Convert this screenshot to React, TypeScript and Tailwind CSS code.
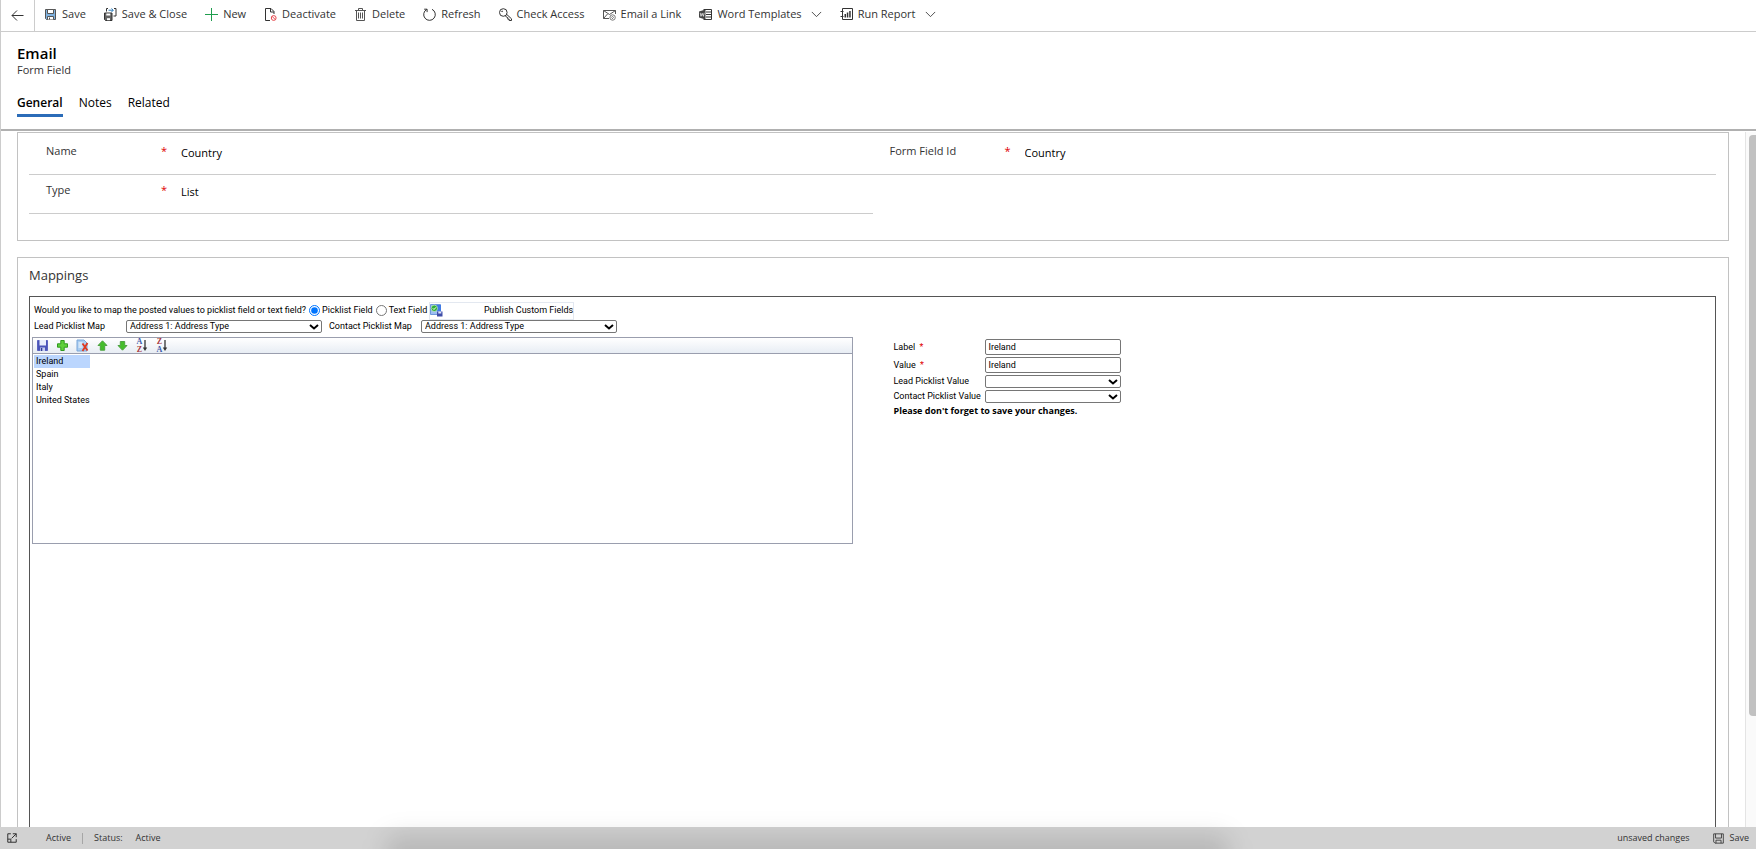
import React, { useState } from "react"

type IconProps = { children: React.ReactNode; className?: string }

const Icon = ({ children, className = "size-[13px]" }: IconProps) => (
    <svg viewBox="0 0 13 13" fill="none" stroke="#333333" strokeWidth="1" className={`${className} shrink-0`} aria-hidden="true">
        {children}
    </svg>
)

//^ COMMAND BAR ICONS ====================================================================================================
const SaveIcon = () => (
    <Icon>
        <path d="M1.500 1.500h10v10h-9l-1-1z" fill="#7fb2e0" stroke="#555" />
        <path d="M3.500 1.500h6v4h-6z" fill="#fff" stroke="#555" />
        <path d="M3.500 11.500v-3h6v3" fill="#fff" stroke="#555" />
        <path d="M5.500 9.500v2" stroke="#555" />
    </Icon>
)

const SaveCloseIcon = () => (
    <Icon>
        <path d="M.5 5h7.500v7.500H1.500l-1-1z" fill="#666" />
        <path d="M2.300 5.500h4v2h-4z" fill="#fff" stroke="none" />
        <path d="M3 10.200h3v2H3z" fill="#fff" stroke="none" />
        <path d="M2.500 3.500V.5H4M10 .5h2V8H9.500" />
        <path d="M4.500 2.200h4.500M7.500.5l1.800 1.700L7.500 4" stroke="#2a7ab8" />
    </Icon>
)

const NewIcon = () => (
    <Icon>
        <path d="M6.500 0v13M0 6.500h13" stroke="#1f9d4d" />
    </Icon>
)

const DeactivateIcon = () => (
    <Icon>
        <path d="M6 12.500H1.500V.5h5.500l3 3V6M6.500.5v3.500h3.500" />
        <circle cx="9.700" cy="10" r="2.400" stroke="#e5484d" fill="#fff" />
        <path d="M8 8.300l3.400 3.400" stroke="#e5484d" />
    </Icon>
)

const DeleteIcon = () => (
    <Icon>
        <path d="M1 2.500h11M4.500 2.500V.5h4v2M2.500 2.500v10h8v-10M4.500 4.500v6M6.500 4.500v6M8.500 4.500v6" stroke="#555" />
    </Icon>
)

const RefreshIcon = () => (
    <Icon>
        <path d="M9 1.300A5.800 5.800 0 1 1 3.800 1.400M1.200 1.200h2.900v2.900" />
    </Icon>
)

const KeyIcon = () => (
    <Icon>
        <circle cx="4.300" cy="4.500" r="3.800" />
        <circle cx="3.100" cy="3.300" r=".4" />
        <path d="M7.600 6.300l4.900 4.500v1.700h-2.300v-1.300H8.800V9.700L7 8.600l-.8-.8" />
    </Icon>
)

const EmailIcon = () => (
    <Icon>
        <path d="M6 10.500H.5v-8h12V6M.5 2.500l6 4 6-4M.5 10.500l4-4.500" stroke="#555" />
        <circle cx="9.600" cy="9.500" r="2.700" fill="#fff" stroke="#777" />
        <path d="M8 9.800l1.500-1.500 1 1M9 11l1.700-1.700" stroke="#777" />
    </Icon>
)

const WordIcon = () => (
    <Icon>
        <path d="M4.500 1.500h8v10h-8M7 4h5M7 6.500h5M7 9h5" />
        <path d="M0 3.500L6.500 1.500v10L0 9.500z" fill="#444" stroke="none" />
        <path d="M1.200 4.800l.8 3.500 1.200-3 1.200 3 .8-3.500" stroke="#fff" strokeWidth=".7" />
    </Icon>
)

const ReportIcon = () => (
    <Icon>
        <path d="M2.500 3V.5h10v11h-10V9M.5 3.500h3M.5 8.500h3M2.500 4v4" />
        <path d="M4.500 6H6v3.500H4.500zM6.800 4.500h1.500v5H6.800zM9.200 3h1.500v6.500H9.200z" fill="#333" stroke="none" />
    </Icon>
)

const ChevronIcon = () => (
    <Icon className="ml-[4px] size-[11px]">
        <path d="M1 3.500l5.500 5.500L12 3.500" />
    </Icon>
)

//^ PICKLIST TOOLBAR ICONS ===============================================================================================
const DiskIcon = () => (
    <Icon>
        <path d="M1.500 1.500h10v10h-10z" fill="#4a54b8" stroke="#5a63c0" />
        <path d="M3.500 1h6.500v5.500H3.500z" fill="#e8eefc" stroke="none" />
        <path d="M4 8.500h5V12H4z" fill="#c5cdf0" stroke="none" />
        <path d="M4.800 9h1.500v3H4.800z" fill="#2e3a94" stroke="none" />
    </Icon>
)

const PlusIcon = () => (
    <Icon>
        <path d="M4.800 1.500h3.400v3.300h3.300v3.400H8.200v3.300H4.800V8.200H1.500V4.800h3.300z" fill="#5fd03c" stroke="#2f9a1e" />
    </Icon>
)

const RemoveIcon = () => (
    <Icon>
        <path d="M1 1h7l3 3v8H1z" fill="#a9cdf2" stroke="#7aa6d8" />
        <path d="M2.500 4h4M2.500 6h4M2.500 8h4" stroke="#fff" />
        <path d="M6.500 4.500l5 7M11.500 4l-5 8" stroke="#e0391f" strokeWidth="1.800" />
    </Icon>
)

const UpIcon = () => (
    <Icon>
        <path d="M6.500 1.800l4.500 4.700H8.700v4.700H4.300V6.500H2z" fill="#45bd2c" stroke="#4fa343" />
    </Icon>
)

const DownIcon = () => (
    <Icon>
        <path d="M6.500 11.200L11 6.500H8.700V2.500H4.300v4H2z" fill="#45bd2c" stroke="#4fa343" />
    </Icon>
)

type SortProps = { top: string; bottom: string; topClass: string; bottomClass: string }

const SortIcon = ({ top, bottom, topClass, bottomClass }: SortProps) => (
    <span className="flex items-center">
        <span className="flex flex-col font-['Liberation_Serif',serif] text-[8px] leading-[8px] font-bold">
            <span className={topClass}>{top}</span>
            <span className={bottomClass}>{bottom}</span>
        </span>
        <svg viewBox="0 0 6 13" className="h-[13px] w-[6px]" fill="none" stroke="#333" aria-hidden="true">
            <path d="M3 1v9" strokeWidth="1.300" />
            <path d="M.8 8.500h4.400L3 12z" fill="#333" stroke="none" />
        </svg>
    </span>
)

const PublishIcon = () => (
    <Icon>
        <path d="M.5.5h10v10H.5z" fill="#9dbff2" stroke="#6f97dc" />
        <path d="M6 1h5v6H6z" fill="#3f7be6" stroke="none" />
        <circle cx="4.300" cy="4.300" r="3.200" fill="#2fae35" stroke="#e6f5e6" strokeWidth=".6" />
        <path d="M2.800 4.300l1.200 1.200L6 3.300" stroke="#fff" />
        <path d="M7 7.500h5.500v5H7z" fill="#3f4da8" stroke="none" />
        <path d="M8.300 7.500h3v2h-3z" fill="#dfe5fa" stroke="none" />
    </Icon>
)

//^ DATA =================================================================================================================
type Command = { label: string; icon: React.ReactNode; menu?: boolean }

const commands: Command[] = [
    { label: "Save", icon: <SaveIcon /> },
    { label: "Save & Close", icon: <SaveCloseIcon /> },
    { label: "New", icon: <NewIcon /> },
    { label: "Deactivate", icon: <DeactivateIcon /> },
    { label: "Delete", icon: <DeleteIcon /> },
    { label: "Refresh", icon: <RefreshIcon /> },
    { label: "Check Access", icon: <KeyIcon /> },
    { label: "Email a Link", icon: <EmailIcon /> },
    { label: "Word Templates", icon: <WordIcon />, menu: true },
    { label: "Run Report", icon: <ReportIcon />, menu: true },
]

const tools: Command[] = [
    { label: "Save list", icon: <DiskIcon /> },
    { label: "Add", icon: <PlusIcon /> },
    { label: "Remove", icon: <RemoveIcon /> },
    { label: "Move up", icon: <UpIcon /> },
    { label: "Move down", icon: <DownIcon /> },
    { label: "Sort ascending", icon: <SortIcon top="A" bottom="Z" topClass="text-[#3c5aa8]" bottomClass="text-[#a8383c]" /> },
    { label: "Sort descending", icon: <SortIcon top="Z" bottom="A" topClass="text-[#a8383c]" bottomClass="text-[#3c5aa8]" /> },
]

const countries: string[] = ["Ireland", "Spain", "Italy", "United States"]

//^ FORM PARTS ===========================================================================================================
type FieldProps = { id: string; label: string; value: string }

const Field = ({ id, label, value }: FieldProps) => (
    <div className="flex h-[39px] items-start border-b border-[#cccccc] pt-[7px] pl-[17px] text-[11px] leading-[16px]">
        <label htmlFor={id} className="w-[115px] text-[#333333]">{label}</label>
        <span className="w-[20px] text-[#e00000]">*</span>
        <input id={id} defaultValue={value} className="mt-[2px] h-[16px] min-w-0 flex-1 text-black outline-none" />
    </div>
)

type PickProps = { id: string; options: string[]; className: string }

const Pick = ({ id, options, className }: PickProps) => (
    <span className={`relative inline-flex ${className}`}>
        <select id={id} className="h-[13px] w-full appearance-none rounded-[2px] border border-[#767676] bg-white pl-[3px] leading-[11px]">
            {options.map(item => <option key={item}>{item}</option>)}
        </select>
        <svg viewBox="0 0 10 6" className="pointer-events-none absolute top-[4px] right-[3px] h-[6px] w-[10px]" fill="none" stroke="#000" strokeWidth="2" aria-hidden="true">
            <path d="M1 1l4 3.500L9 1" />
        </svg>
    </span>
)

//^ APP.TSX ==============================================================================================================
const App = (): React.ReactNode => {
    const [selected, setSelected] = useState<string>("Ireland")

    return (
        <div className="flex h-screen flex-col overflow-hidden bg-white font-['Open_Sans','Noto_Sans',sans-serif] text-[#333333]">
            <div className="flex min-h-0 flex-1 flex-col border-l border-[#cccccc]">
                {/* command bar */}
                <nav className="flex h-[32px] shrink-0 border-b border-[#cccccc]">
                    <button aria-label="Back" className="flex w-[34px] items-center justify-center border-r border-[#cccccc]">
                        <Icon>
                            <path d="M12.500 6.500H1M6 1.500l-5 5 5 5" />
                        </Icon>
                    </button>
                    <div className="flex h-[28px] items-center gap-[18px] pl-[9px]">
                        {commands.map(item => (
                            <button key={item.label} className="flex items-center gap-[5px] text-[11px] leading-[16px] whitespace-nowrap">
                                {item.icon}
                                {item.label}
                                {item.menu && <ChevronIcon />}
                            </button>
                        ))}
                    </div>
                </nav>

                {/* record header */}
                <header className="h-[99px] shrink-0 border-b-2 border-[#b0b0b0] pt-[11px] pl-[16px]">
                    <h1 className="text-[15px] leading-[20px] font-semibold text-black">Email</h1>
                    <p className="text-[11px] leading-[13px]">Form Field</p>
                    <div role="tablist" className="mt-[17px] flex gap-[16px] text-[12px] leading-[20px] text-black">
                        <button role="tab" aria-selected="true" className="border-b-[3px] border-[#2b6cb8] pb-[1px] font-semibold">General</button>
                        <button role="tab" aria-selected="false" className="border-b-[3px] border-transparent pb-[1px]">Notes</button>
                        <button role="tab" aria-selected="false" className="border-b-[3px] border-transparent pb-[1px]">Related</button>
                    </div>
                </header>

                <main className="flex min-h-0 flex-1 pt-px">
                    <div className="flex min-w-0 flex-1 flex-col gap-[16px] pr-[16px] pl-[16px]">
                        <section className="h-[109px] shrink-0 border border-[#c2c2c2] pt-[3px] pr-[12px] pl-[11px]">
                            <div className="grid grid-cols-2">
                                <Field id="name" label="Name" value="Country" />
                                <Field id="fieldId" label="Form Field Id" value="Country" />
                                <Field id="type" label="Type" value="List" />
                            </div>
                        </section>

                        <section className="flex min-h-0 flex-1 flex-col border border-b-0 border-[#c2c2c2] pr-[12px] pl-[11px]">
                            <h2 className="pt-[7px] text-[13px] leading-[20px]">Mappings</h2>
                            <div className="mt-[11px] flex-1 border border-b-0 border-[#555555] pt-[5px] pr-[2px] pl-[2px] font-['Roboto','Noto_Sans',sans-serif] text-[9px] leading-[13px] text-black">
                                <div className="flex h-[17px] items-center pl-[2px]">
                                    <span className="mr-[3px]">Would you like to map the posted values to picklist field or text field?</span>
                                    <input id="picklist" type="radio" name="kind" defaultChecked className="mr-[2px] size-[11px]" />
                                    <label htmlFor="picklist" className="mr-[3px]">Picklist Field</label>
                                    <input id="text" type="radio" name="kind" className="mr-[2px] size-[11px]" />
                                    <label htmlFor="text" className="mr-[2px]">Text Field</label>
                                    <button className="flex h-[18px] w-[145px] items-center justify-between border border-[#e3e8f0]">
                                        <PublishIcon />
                                        Publish Custom Fields
                                    </button>
                                </div>
                                <div className="mt-px flex h-[13px] items-center pl-[2px]">
                                    <label htmlFor="leadMap" className="w-[92px]">Lead Picklist Map</label>
                                    <Pick id="leadMap" options={["Address 1: Address Type"]} className="w-[196px]" />
                                    <label htmlFor="contactMap" className="w-[99px] pl-[7px]">Contact Picklist Map</label>
                                    <Pick id="contactMap" options={["Address 1: Address Type"]} className="w-[196px]" />
                                </div>

                                <div className="mt-[4px] grid grid-cols-[821fr_859fr]">
                                    <div className="h-[207px] border border-[#9a9eae]">
                                        <div className="flex h-[16px] items-center gap-[7px] border-b border-[#9a9eae] bg-linear-to-b from-white to-[#e8edf4] pl-[3px]">
                                            {tools.map(item => (
                                                <button key={item.label} aria-label={item.label} className="flex w-[13px] items-center justify-center">{item.icon}</button>
                                            ))}
                                        </div>
                                        <ul className="w-[57px] pt-[1px] pl-[1px]">
                                            {countries.map(item => (
                                                <li key={item}>
                                                    <button
                                                        onClick={() => setSelected(item)}
                                                        className={`block h-[13px] w-full pl-[2px] text-left whitespace-nowrap ${item === selected ? "bg-[#bbd6fe]" : ""}`}
                                                    >
                                                        {item}
                                                    </button>
                                                </li>
                                            ))}
                                        </ul>
                                    </div>

                                    <div className="pt-[2px] pl-[40px]">
                                        <div className="grid grid-cols-[92px_136px] items-center gap-y-[2px]">
                                            <label htmlFor="label">Label <span className="pl-[2px] text-[#e00000]">*</span></label>
                                            <input id="label" defaultValue="Ireland" className="h-[16px] rounded-[2px] border border-[#767676] px-[2px]" />
                                            <label htmlFor="value">Value <span className="pl-[2px] text-[#e00000]">*</span></label>
                                            <input id="value" defaultValue="Ireland" className="h-[16px] rounded-[2px] border border-[#767676] px-[2px]" />
                                            <label htmlFor="leadValue">Lead Picklist Value</label>
                                            <Pick id="leadValue" options={[""]} className="w-[136px]" />
                                            <label htmlFor="contactValue">Contact Picklist Value</label>
                                            <Pick id="contactValue" options={[""]} className="w-[136px]" />
                                        </div>
                                        <p className="mt-[1px] font-['Open_Sans','Noto_Sans',sans-serif] font-bold">Please don't forget to save your changes.</p>
                                    </div>
                                </div>
                            </div>
                        </section>
                    </div>

                    {/* scroll track */}
                    <div className="w-[11px] shrink-0 border-l border-[#e4e4e4] bg-[#fafafa] pt-[3px] pl-[3px]">
                        <div className="h-[84%] rounded-l-[4px] bg-[#c1c1c1]"></div>
                    </div>
                </main>
            </div>

            <footer className="relative flex h-[22px] shrink-0 items-center bg-[#d2d2d2] text-[9px] leading-[14px]">
                <div className="pointer-events-none absolute top-[8px] right-[30%] left-[22%] h-[60px] rounded-[12px] bg-black/12 blur-[12px]"></div>
                <button aria-label="Pop out" className="ml-[7px] w-[39px]">
                    <Icon className="size-[10px]">
                        <path d="M5 1H1v11h11V8M7.500 1H12v4.500M12 1L6 7M1 8h4v4" strokeWidth="1.300" />
                    </Icon>
                </button>
                <span>Active</span>
                <span className="mx-[11px] h-[11px] border-l border-[#a6a6a6]"></span>
                <span>Status:</span>
                <span className="ml-[13px]">Active</span>
                <span className="ml-auto">unsaved changes</span>
                <button className="mr-[7px] ml-[23px] flex items-center gap-[6px]">
                    <Icon className="size-[11px]">
                        <path d="M.8 1h11.400v11H2.300L.8 10.500zM3 1v5h7V1M3.500 12V8.500h6V12" />
                    </Icon>
                    Save
                </button>
            </footer>
        </div>
    )
}
export default App
